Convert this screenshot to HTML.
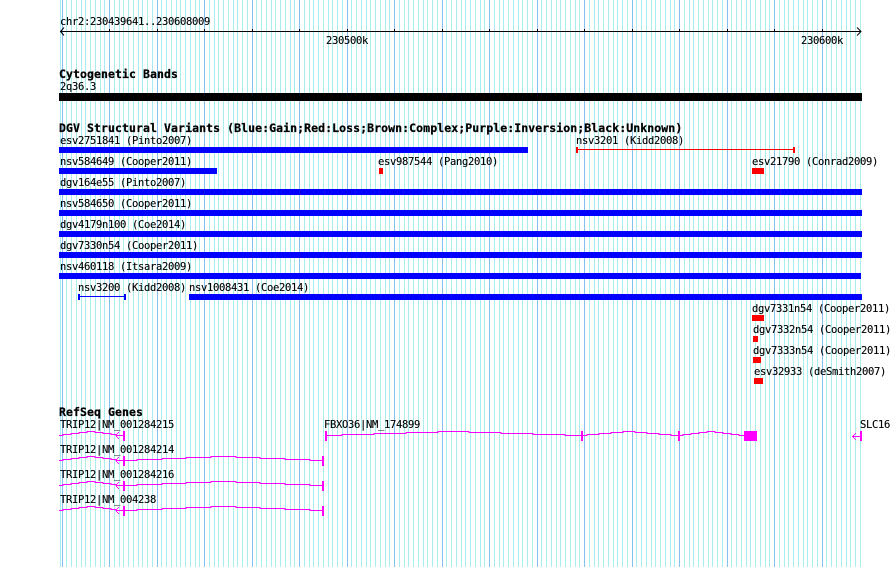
<!DOCTYPE html>
<html><head><meta charset="utf-8"><style>
html,body{margin:0;padding:0;background:#fff;width:890px;height:567px;overflow:hidden}
svg{display:block}
text{font-family:"DejaVu Sans Mono","Liberation Mono",monospace;font-size:10.5px;letter-spacing:-.32px;fill:#000;stroke:#000;stroke-width:.12px}
text.b{font-weight:bold;font-size:11.5px;letter-spacing:.08px;stroke-width:.25px}
.c{shape-rendering:crispEdges}
</style></head><body>
<svg width="890" height="567" viewBox="0 0 890 567" xmlns="http://www.w3.org/2000/svg">
<g class="c" fill="none">
<path stroke="#a8eeee" d="M60.5 0V567M66.5 0V567M71.5 0V567M76.5 0V567M81.5 0V567M85.5 0V567M90.5 0V567M95.5 0V567M100.5 0V567M104.5 0V567M114.5 0V567M119.5 0V567M123.5 0V567M128.5 0V567M133.5 0V567M138.5 0V567M142.5 0V567M147.5 0V567M152.5 0V567M161.5 0V567M166.5 0V567M171.5 0V567M176.5 0V567M180.5 0V567M185.5 0V567M190.5 0V567M195.5 0V567M199.5 0V567M209.5 0V567M214.5 0V567M218.5 0V567M223.5 0V567M228.5 0V567M233.5 0V567M237.5 0V567M242.5 0V567M247.5 0V567M256.5 0V567M261.5 0V567M266.5 0V567M271.5 0V567M275.5 0V567M280.5 0V567M285.5 0V567M290.5 0V567M294.5 0V567M304.5 0V567M309.5 0V567M313.5 0V567M318.5 0V567M323.5 0V567M328.5 0V567M332.5 0V567M337.5 0V567M342.5 0V567M351.5 0V567M356.5 0V567M361.5 0V567M366.5 0V567M370.5 0V567M375.5 0V567M380.5 0V567M385.5 0V567M389.5 0V567M399.5 0V567M404.5 0V567M408.5 0V567M413.5 0V567M418.5 0V567M423.5 0V567M427.5 0V567M432.5 0V567M437.5 0V567M446.5 0V567M451.5 0V567M456.5 0V567M461.5 0V567M465.5 0V567M470.5 0V567M475.5 0V567M480.5 0V567M484.5 0V567M494.5 0V567M499.5 0V567M503.5 0V567M508.5 0V567M513.5 0V567M518.5 0V567M522.5 0V567M527.5 0V567M532.5 0V567M541.5 0V567M546.5 0V567M551.5 0V567M556.5 0V567M560.5 0V567M565.5 0V567M570.5 0V567M575.5 0V567M579.5 0V567M589.5 0V567M594.5 0V567M598.5 0V567M603.5 0V567M608.5 0V567M613.5 0V567M617.5 0V567M622.5 0V567M627.5 0V567M636.5 0V567M641.5 0V567M646.5 0V567M651.5 0V567M655.5 0V567M660.5 0V567M665.5 0V567M670.5 0V567M674.5 0V567M684.5 0V567M689.5 0V567M693.5 0V567M698.5 0V567M703.5 0V567M708.5 0V567M712.5 0V567M717.5 0V567M722.5 0V567M731.5 0V567M736.5 0V567M741.5 0V567M746.5 0V567M750.5 0V567M755.5 0V567M760.5 0V567M765.5 0V567M769.5 0V567M779.5 0V567M784.5 0V567M788.5 0V567M793.5 0V567M798.5 0V567M803.5 0V567M807.5 0V567M812.5 0V567M817.5 0V567M826.5 0V567M831.5 0V567M836.5 0V567M841.5 0V567M846.5 0V567M850.5 0V567M855.5 0V567M860.5 0V567"/>
<path stroke="#84c0f0" d="M62.5 0V567M109.5 0V567M157.5 0V567M204.5 0V567M252.5 0V567M299.5 0V567M347.5 0V567M394.5 0V567M442.5 0V567M489.5 0V567M537.5 0V567M584.5 0V567M632.5 0V567M679.5 0V567M727.5 0V567M774.5 0V567M822.5 0V567"/>
<path stroke="#000" d="M60 31.5H861M109.5 29V32M157.5 29V32M204.5 29V32M252.5 29V32M299.5 29V32M347.5 29V32M394.5 29V32M442.5 29V32M489.5 29V32M537.5 29V32M584.5 29V32M632.5 29V32M679.5 29V32M727.5 29V32M774.5 29V32M822.5 29V32"/>
</g>
<path fill="none" stroke="#000" d="M64 27.5L60.5 31.5L64 35.5M857 27.5L861 31.5L857 35.5"/>
<g class="c">
<rect x="59" y="93" width="803" height="8" fill="#000"/>
<g fill="#0000ff">
<rect x="59" y="147" width="469" height="6"/>
<rect x="59" y="168" width="158" height="6"/>
<rect x="59" y="189" width="803" height="6"/>
<rect x="59" y="210" width="803" height="6"/>
<rect x="59" y="231" width="803" height="6"/>
<rect x="59" y="252" width="803" height="6"/>
<rect x="59" y="273" width="802" height="6"/>
<rect x="189" y="294" width="673" height="6"/>
<rect x="78" y="294" width="2" height="6"/>
<rect x="124" y="294" width="2" height="6"/>
<rect x="80" y="296" width="44" height="1"/>
</g>
<g fill="#ff0000">
<rect x="576" y="147" width="2" height="6"/>
<rect x="793" y="147" width="2" height="6"/>
<rect x="578" y="149" width="215" height="1"/>
<rect x="379" y="168" width="4" height="6"/>
<rect x="752" y="168" width="12" height="6"/>
<rect x="752" y="315" width="12" height="6"/>
<rect x="753" y="336" width="5" height="6"/>
<rect x="753" y="357" width="8" height="6"/>
<rect x="754" y="378" width="9" height="6"/>
</g>
<g fill="#ff00ff">
<rect x="123" y="431" width="2" height="10"/>
<rect x="123" y="456" width="2" height="10"/>
<rect x="123" y="481" width="2" height="10"/>
<rect x="123" y="506" width="2" height="10"/>
<rect x="322" y="456" width="2" height="10"/>
<rect x="322" y="481" width="2" height="10"/>
<rect x="322" y="506" width="2" height="10"/>
<rect x="325" y="431" width="2" height="10"/>
<rect x="581" y="431" width="2" height="10"/>
<rect x="678" y="431" width="2" height="10"/>
<rect x="744" y="431" width="13" height="10"/>
<rect x="860" y="431" width="2" height="10"/>
</g>
<g fill="none" stroke="#ff00ff">
<path d="M59 435.5H63V434.5H71V433.5H79V432.5H87V431.5H95V432.5H103V433.5H111V434.5H116V435.5H123"/>
<path d="M59 460.5H63V459.5H71V458.5H79V457.5H87V456.5H95V457.5H103V458.5H111V459.5H116V460.5H123M125 460.5H137V459.5H162V458.5H186V457.5H211V456.5H236V457.5H260V458.5H285V459.5H310V460.5H322"/>
<path d="M59 485.5H63V484.5H71V483.5H79V482.5H87V481.5H95V482.5H103V483.5H111V484.5H116V485.5H123M125 485.5H137V484.5H162V483.5H186V482.5H211V481.5H236V482.5H260V483.5H285V484.5H310V485.5H322"/>
<path d="M59 510.5H63V509.5H71V508.5H79V507.5H87V506.5H95V507.5H103V508.5H111V509.5H116V510.5H123M125 510.5H137V509.5H162V508.5H186V507.5H211V506.5H236V507.5H260V508.5H285V509.5H310V510.5H322"/>
<path d="M327 435.5H342V434.5H374V433.5H406V432.5H438V431.5H469V432.5H501V433.5H533V434.5H565V435.5H581M583 435.5H587V434.5H599V433.5H611V432.5H623V431.5H635V432.5H647V433.5H659V434.5H671V435.5H678M680 435.5H683V434.5H691V433.5H699V432.5H707V431.5H715V432.5H723V433.5H731V434.5H739V435.5H744M852 436.5H860"/>
</g>
<g fill="#ff00ff">
<rect x="116" y="434" width="1" height="3"/><rect x="117" y="433" width="1" height="1"/><rect x="117" y="437" width="1" height="1"/><rect x="118" y="432" width="1" height="1"/><rect x="118" y="438" width="1" height="1"/>
<rect x="116" y="459" width="1" height="3"/><rect x="117" y="458" width="1" height="1"/><rect x="117" y="462" width="1" height="1"/><rect x="118" y="457" width="1" height="1"/><rect x="118" y="463" width="1" height="1"/>
<rect x="116" y="484" width="1" height="3"/><rect x="117" y="483" width="1" height="1"/><rect x="117" y="487" width="1" height="1"/><rect x="118" y="482" width="1" height="1"/><rect x="118" y="488" width="1" height="1"/>
<rect x="116" y="509" width="1" height="3"/><rect x="117" y="508" width="1" height="1"/><rect x="117" y="512" width="1" height="1"/><rect x="118" y="507" width="1" height="1"/><rect x="118" y="513" width="1" height="1"/>
<rect x="853" y="435" width="1" height="3"/><rect x="854" y="434" width="1" height="1"/><rect x="854" y="438" width="1" height="1"/><rect x="855" y="433" width="1" height="1"/><rect x="855" y="439" width="1" height="1"/>
</g>
</g>
<text x="60" y="25">chr2:230439641..230608009</text>
<text x="326" y="44">230500k</text>
<text x="801" y="44">230600k</text>
<text class="b" x="59" y="78">Cytogenetic Bands</text>
<text x="60" y="90">2q36.3</text>
<text class="b" x="59" y="132">DGV Structural Variants (Blue:Gain;Red:Loss;Brown:Complex;Purple:Inversion;Black:Unknown)</text>
<text x="60" y="144">esv2751841 (Pinto2007)</text>
<text x="576" y="144">nsv3201 (Kidd2008)</text>
<text x="60" y="165">nsv584649 (Cooper2011)</text>
<text x="378" y="165">esv987544 (Pang2010)</text>
<text x="752" y="165">esv21790 (Conrad2009)</text>
<text x="60" y="186">dgv164e55 (Pinto2007)</text>
<text x="60" y="207">nsv584650 (Cooper2011)</text>
<text x="60" y="228">dgv4179n100 (Coe2014)</text>
<text x="60" y="249">dgv7330n54 (Cooper2011)</text>
<text x="60" y="270">nsv460118 (Itsara2009)</text>
<text x="78" y="291">nsv3200 (Kidd2008)</text>
<text x="189" y="291">nsv1008431 (Coe2014)</text>
<text x="752" y="312">dgv7331n54 (Cooper2011)</text>
<text x="753" y="333">dgv7332n54 (Cooper2011)</text>
<text x="753" y="354">dgv7333n54 (Cooper2011)</text>
<text x="754" y="375">esv32933 (deSmith2007)</text>
<text class="b" x="59" y="416">RefSeq Genes</text>
<text x="60" y="428">TRIP12|NM_001284215</text>
<text x="60" y="453">TRIP12|NM_001284214</text>
<text x="60" y="478">TRIP12|NM_001284216</text>
<text x="60" y="503">TRIP12|NM_004238</text>
<text x="324" y="428">FBXO36|NM_174899</text>
<text x="860" y="428">SLC16</text>
</svg>
</body></html>
